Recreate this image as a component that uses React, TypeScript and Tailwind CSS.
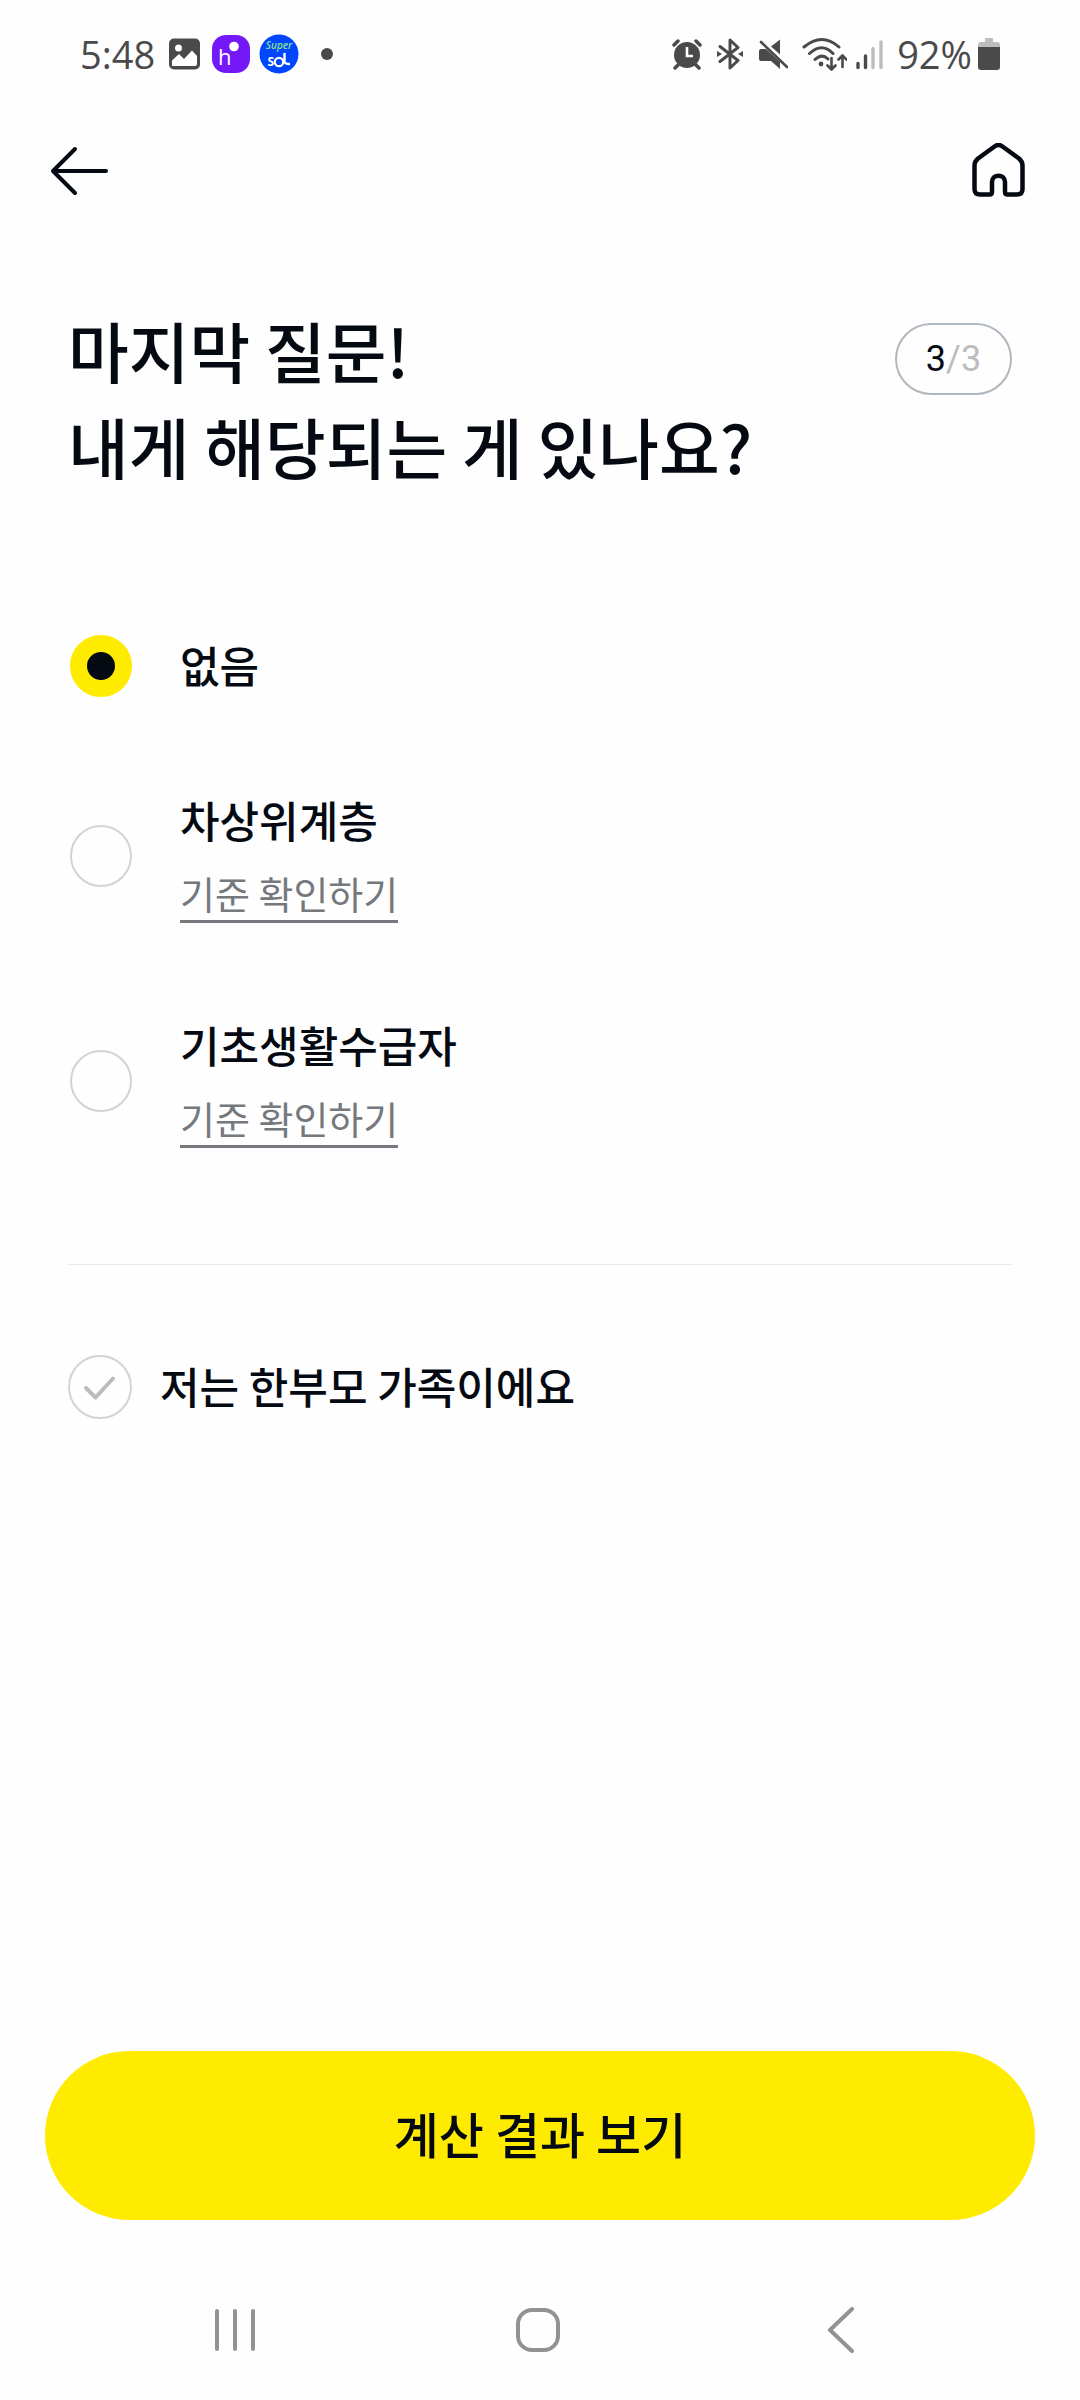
import { useState } from "react";

const OPTIONS = [
  { id: "none", label: "없음", hasCriteria: false },
  { id: "near-poor", label: "차상위계층", hasCriteria: true },
  { id: "basic-recipient", label: "기초생활수급자", hasCriteria: true },
];

function StatusBar() {
  return (
    <div className="flex h-[108px] items-center justify-between px-20 font-['Open_Sans','Noto_Sans',sans-serif] text-[38px] leading-none font-normal text-[#4a4a4a]">
      <div className="flex items-center">
        <span>5:48</span>
        <svg className="ml-3.5 h-8 w-8" viewBox="0 0 32 32" aria-hidden="true">
          <rect x="0" y="0.5" width="31" height="31" rx="5" fill="#4a4a4a" />
          <circle cx="9.500" cy="10" r="3.500" fill="#fff" />
          <path
            d="M3 28v-5.500l7-6.500 5 5 8-8.500 5 5.500v8q0 2-2 2z"
            fill="#fff"
          />
        </svg>
        <svg className="ml-2.5 h-10 w-10" viewBox="0 0 40 40" aria-hidden="true">
          <rect x="1" y="1" width="38" height="38" rx="14" fill="#7518f8" />
          <text
            x="7"
            y="31"
            fontSize="22"
            fontWeight="400"
            fontFamily="Open Sans, sans-serif"
            fill="#fff"
          >
            h
          </text>
          <circle cx="23" cy="12.500" r="4.800" fill="#fff" />
        </svg>
        <svg className="ml-2 h-10 w-10" viewBox="0 0 40 40" aria-hidden="true">
          <circle cx="20" cy="20" r="19.500" fill="#0046ff" />
          <text
            x="20"
            y="15"
            fontSize="10"
            fontWeight="600"
            fontStyle="italic"
            textAnchor="middle"
            fontFamily="Open Sans, sans-serif"
            fill="#8ee08c"
          >
            Super
          </text>
          <text
            x="8.500"
            y="32"
            fontSize="12"
            fontWeight="700"
            fontFamily="Open Sans, sans-serif"
            fill="#fff"
          >
            S
          </text>
          <circle cx="20" cy="28" r="4.200" fill="none" stroke="#fff" strokeWidth="2.200" />
          <path d="M25.500 19v8.500q0 2.500 5.500 2.500" fill="none" stroke="#fff" strokeWidth="2.400" />
        </svg>
        <span className="ml-[22px] h-3 w-3 rounded-full bg-[#4a4a4a]" />
      </div>

      <div className="flex items-center">
        <svg className="h-8 w-[30px]" viewBox="0 0 30 32" aria-hidden="true">
          <circle cx="15" cy="17" r="13" fill="#4a4a4a" />
          <path
            d="M2 7l4-4M28 7l-4-4M6 27l-3 3M24 27l3 3"
            stroke="#4a4a4a"
            strokeWidth="3.500"
            strokeLinecap="round"
          />
          <path d="M15 9v9h6" fill="none" stroke="#fff" strokeWidth="2.600" />
        </svg>
        <svg className="ml-3.5 h-8 w-7" viewBox="0 0 28 32" aria-hidden="true">
          <path
            d="M4 8.500l18 14-8 7.500V2l8 7.500-18 14"
            fill="none"
            stroke="#4a4a4a"
            strokeWidth="3"
            strokeLinejoin="round"
            strokeLinecap="round"
          />
          <path d="M1 13l5 3-5 3zM27 13l-5 3 5 3z" fill="#4a4a4a" />
        </svg>
        <svg className="ml-3.5 h-8 w-[30px]" viewBox="0 0 30 32" aria-hidden="true">
          <path
            d="M3 11h5l14 13v7l-9-8H3q-2 0-2-2v-8q0-2 2-2zM22 1.500v15l-9-8z"
            fill="#4a4a4a"
          />
          <path d="M3 4l26 25" stroke="#4a4a4a" strokeWidth="2.600" strokeLinecap="round" />
        </svg>
        <svg className="ml-3.5 h-9 w-[45px]" viewBox="0 0 45 36" aria-hidden="true">
          <g fill="none" stroke="#4a4a4a" strokeWidth="3" strokeLinecap="round" strokeLinejoin="round">
            <path d="M2 11Q20-4 37 11M7.500 17.500Q20 6 31 17.500M13 23.500Q20 17 26 23" />
            <path strokeWidth="2.600" d="M29.500 22v11M25.500 29.500l4 4 4-4M40.500 31V20M36.500 23.500l4-4 4 4" />
          </g>
          <circle cx="19" cy="28" r="2.400" fill="#4a4a4a" />
        </svg>
        <svg className="ml-2 h-8 w-[30px]" viewBox="0 0 30 32" aria-hidden="true">
          <g strokeWidth="3.400" strokeLinecap="round">
            <path d="M3 25.500v4M10.500 18v11.500" stroke="#4a4a4a" />
            <path d="M18 10.500v19M26 4v25.500" stroke="#bdbdbd" />
          </g>
        </svg>
        <span className="ml-3">92%</span>
        <svg className="ml-1.5 h-8 w-[22px]" viewBox="0 0 22 32" aria-hidden="true">
          <path d="M7 0h8v4h4q3 0 3 3v3H0V7q0-3 3-3h4z" fill="#bdbdbd" />
          <path d="M0 9h22v20q0 3-3 3H3q-3 0-3-3z" fill="#4a4a4a" />
        </svg>
      </div>
    </div>
  );
}

function Header() {
  return (
    <header className="flex h-[125px] items-center justify-between px-[50px]">
      <button type="button" aria-label="뒤로" className="cursor-pointer">
        <svg className="h-[52px] w-[60px]" viewBox="0 0 60 52">
          <path
            d="M25 4L3 26l22 22M3 26h53"
            fill="none"
            stroke="#050a12"
            strokeWidth="4"
            strokeLinecap="round"
            strokeLinejoin="round"
          />
        </svg>
      </button>
      <button type="button" aria-label="홈" className="cursor-pointer">
        <svg className="h-14 w-[60px]" viewBox="0 1 60 56">
          <path
            d="M24.500 4.500L8 16.500q-3.500 3-3.500 7V47q0 5.500 5.500 5.500h9.500q2.500 0 2.500-2.500V40c0-8.500 13-8.500 13 0v10q0 2.500 2.500 2.500H47q5.500 0 5.500-5.500V23.500q0-4-3.500-7L32.500 4.500q-4-3-8 0z"
            fill="none"
            stroke="#050a12"
            strokeWidth="4.500"
            strokeLinejoin="round"
          />
        </svg>
      </button>
    </header>
  );
}

function NavigationBar() {
  return (
    <nav className="flex h-[140px] items-center justify-between pr-[226px] pl-[214px]">
      <button type="button" aria-label="최근 앱">
        <svg className="h-[42px] w-[42px]" viewBox="0 0 42 42">
          <path
            d="M3 2v38M21 2v38M39 2v38"
            stroke="#929292"
            strokeWidth="4"
            strokeLinecap="round"
          />
        </svg>
      </button>
      <button
        type="button"
        aria-label="홈 화면"
        className="h-11 w-11 rounded-[16px] border-4 border-[#929292]"
      />
      <button type="button" aria-label="이전">
        <svg className="h-[46px] w-[35px]" viewBox="0 0 35 46">
          <path
            d="M33 2L11 23l22 21"
            fill="none"
            stroke="#929292"
            strokeWidth="4"
            strokeLinecap="round"
            strokeLinejoin="round"
          />
        </svg>
      </button>
    </nav>
  );
}

export default function App() {
  const [selected, setSelected] = useState("none");
  const [singleParent, setSingleParent] = useState(false);

  return (
    <div className="flex min-h-screen flex-col bg-[#fefefe] font-['Noto_Sans_CJK_KR',sans-serif] text-[#050a12]">
      <StatusBar />
      <Header />

      <main className="flex flex-1 flex-col px-[68px] pt-[68px]">
        <div className="flex items-start justify-between">
          <h1 className="text-[66px] leading-[96px] font-medium">
            마지막 질문!
            <br />
            내게 해당되는 게 있나요?
          </h1>
          <p className="mt-[22px] flex h-[72px] w-[117px] items-center justify-center rounded-full border-2 border-[#b0b8bf] font-[Roboto,sans-serif] text-4xl">
            3<span className="text-[#bcbcbc]">/3</span>
          </p>
        </div>

        <div
          role="radiogroup"
          aria-label="해당 사항"
          className="mt-[141px] flex flex-col gap-[91px] pl-0.5"
        >
          {OPTIONS.map((option) => (
            <div key={option.id} className="flex items-center gap-12">
              <input
                id={option.id}
                type="radio"
                name="status"
                checked={selected === option.id}
                onChange={() => setSelected(option.id)}
                className="h-[62px] w-[62px] shrink-0 cursor-pointer appearance-none rounded-full border-2 border-[#cfd4d9] checked:border-[17px] checked:border-[#ffeb00] checked:bg-[#050a12]"
              />
              <div className="flex flex-col items-start">
                <label
                  htmlFor={option.id}
                  className="cursor-pointer pb-1 text-[43px] leading-[60px] font-medium"
                >
                  {option.label}
                </label>
                {option.hasCriteria && (
                  <a
                    href={`#${option.id}`}
                    className="mt-4 border-b-3 border-[#75787c] pb-[3px] text-[38px] leading-[48px] text-[#75787c]"
                  >
                    기준 확인하기
                  </a>
                )}
              </div>
            </div>
          ))}
        </div>

        <hr className="mt-[116px] border-[#e8eaeb]" />

        <label className="mt-[90px] flex cursor-pointer items-center">
          <input
            type="checkbox"
            checked={singleParent}
            onChange={(e) => setSingleParent(e.target.checked)}
            className="peer sr-only"
          />
          <svg
            className="h-16 w-16 text-[#bcbcbc] peer-checked:text-[#050a12]"
            viewBox="0 0 64 64"
            aria-hidden="true"
          >
            <circle cx="32" cy="32" r="31" fill="none" stroke="#cfd4d9" strokeWidth="2" />
            <path
              d="M18 33l9.500 9.500L45 23.500"
              fill="none"
              stroke="currentColor"
              strokeWidth="4"
              strokeLinecap="round"
              strokeLinejoin="round"
            />
          </svg>
          <span className="ml-7 pb-1 text-[43px] leading-[60px] font-medium">
            저는 한부모 가족이에요
          </span>
        </label>
      </main>

      <div className="px-[45px] pb-10">
        <button
          type="button"
          className="h-[169px] w-full cursor-pointer rounded-full bg-[#ffeb00] pb-1.5 text-[49px] font-medium"
        >
          계산 결과 보기
        </button>
      </div>
      <NavigationBar />
    </div>
  );
}
